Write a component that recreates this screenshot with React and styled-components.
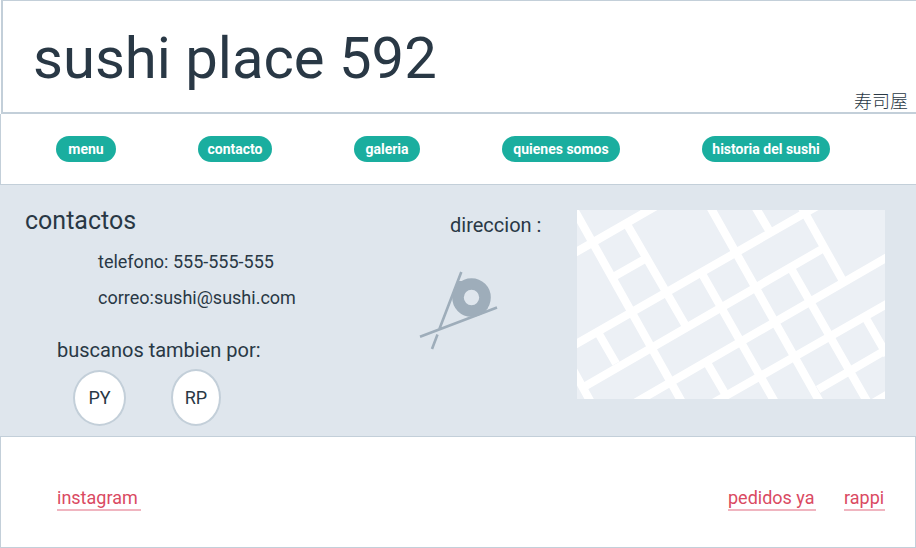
import React from "react";
import styled, { createGlobalStyle } from "styled-components";

const ink = "#293845";
const line = "#c3cfd9";

const GlobalStyle = createGlobalStyle`
  * { box-sizing: border-box; }
  body {
    margin: 0;
    background: #fff;
    color: ${ink};
    font-family: Roboto, "Noto Sans CJK JP", sans-serif;
  }
  h1, h2, h3, p { margin: 0; font-weight: 400; }
`;

const Page = styled.div`
  display: flex;
  flex-direction: column;
  min-height: 100vh;
`;

const Header = styled.header`
  display: flex;
  justify-content: space-between;
  align-items: flex-end;
  margin-left: 1px;
  padding: 17px 8px 0 30px;
  border: solid ${line};
  border-width: 1px 0 2px 2px;
`;

const Title = styled.h1`
  padding-bottom: 14px;
  font-size: 58px;
  line-height: 80px;
`;

const Kanji = styled.p`
  font-family: "Noto Sans CJK JP", sans-serif;
  font-size: 18px;
  font-weight: 300;
  line-height: 24px;
`;

const Nav = styled.nav`
  display: flex;
  gap: 82px;
  padding: 22px 55px;
  border: solid ${line};
  border-width: 0 0 1px 1px;
`;

const Pill = styled.button`
  flex: none;
  width: ${(p) => p.$width}px;
  height: 26px;
  padding: 0;
  border: 0;
  border-radius: 13px;
  background: #1aae9f;
  color: #fff;
  font: 700 14px/26px Roboto, sans-serif;
  text-align: center;
  white-space: nowrap;
  cursor: pointer;
`;

const Contact = styled.main`
  display: flex;
  padding: 20px 31px 10px 25px;
  background: #dfe6ed;
`;

const Details = styled.section`
  flex: 1;
`;

const Heading = styled.h2`
  font-size: 25px;
  line-height: 32px;
`;

const Lines = styled.div`
  display: flex;
  flex-direction: column;
  gap: 12px;
  padding: 13px 0 0 73px;
  font-size: 18px;
  line-height: 24px;
`;

const Social = styled.section`
  padding: 26px 0 0 32px;
`;

const Subheading = styled.h3`
  font-size: 20px;
  line-height: 28px;
`;

const Bubbles = styled.div`
  display: flex;
  align-items: flex-end;
  gap: 45px;
  padding: 5px 0 0 16px;
`;

const Bubble = styled.button`
  width: ${(p) => p.$width}px;
  height: ${(p) => p.$height}px;
  padding: 0;
  border: 2px solid ${line};
  border-radius: 50%;
  background: #fff;
  color: ${ink};
  font: 400 18px/24px Roboto, sans-serif;
  cursor: pointer;
`;

const Address = styled.section`
  display: flex;
  flex-direction: column;
  gap: 31px;
  width: 159px;
  padding-top: 6px;

  ${Subheading} { padding-left: 32px; }
`;

const MapFrame = styled.div`
  width: 308px;
  height: 189px;
  margin-top: 5px;
  background: #ecf0f5;

  svg { display: block; }
`;

const Footer = styled.footer`
  display: flex;
  flex: 1;
  align-items: flex-start;
  gap: 28px;
  padding: 50px 30px 36px 56px;
  border: 1px solid ${line};
`;

const FooterLink = styled.a`
  width: ${(p) => p.$width}px;
  margin-right: ${(p) => (p.$push ? "auto" : "0")};
  border-bottom: 2px solid #f0b5c0;
  color: #da4a62;
  font-size: 18px;
  line-height: 22px;
  text-decoration: none;
  white-space: nowrap;
`;

const navItems = [
  ["menu", 60],
  ["contacto", 74],
  ["galeria", 66],
  ["quienes somos", 118],
  ["historia del sushi", 128],
];

function RollIcon() {
  return (
    <svg width="82" height="82" viewBox="0 0 82 82" aria-hidden="true">
      <g fill="none" stroke="#9eadba">
        <circle cx="53.5" cy="27.5" r="13.5" strokeWidth="11.6" />
        <path
          d="M43.3 2 21.3 59.3M19.5 64.5 14 79M2 66.8 79 37.5"
          strokeWidth="2.6"
        />
      </g>
      <path d="M40.5 11 45 11 37 20ZM66 42 70 38 67 36 56 46Z" fill="#9eadba" />
    </svg>
  );
}

function StreetMap() {
  return (
    <MapFrame role="img" aria-label="mapa">
      <svg width="100%" height="100%" viewBox="0 0 308 189" preserveAspectRatio="xMidYMid slice">
        <g fill="none" stroke="#fff" strokeWidth="8.2">
          <path d="M-6 45 80-4.5M-6 137 242-5M6 177.5 246 38.5M56 194 314 45M131 196 314 91.5M241 179.5 308 140.5M291 196 320 179M38 66 67 49.5" />
          <path d="M-6-6 106 194M49.5 13.5 108.5 115.5M131.5-6 244 194M176.5-6 193 22M224-4 266 71M213.5 57.5 291 193M124 62 199 194M129 151 150 187M20.5 121.5 39 153.5M-5 158 16 196M287 105 310 145" />
        </g>
      </svg>
    </MapFrame>
  );
}

export default function App() {
  return (
    <Page>
      <GlobalStyle />
      <Header>
        <Title>sushi place 592</Title>
        <Kanji lang="ja">寿司屋</Kanji>
      </Header>
      <Nav>
        {navItems.map(([label, width]) => (
          <Pill key={label} type="button" $width={width}>
            {label}
          </Pill>
        ))}
      </Nav>
      <Contact>
        <Details>
          <Heading>contactos</Heading>
          <Lines>
            <p>telefono: 555-555-555</p>
            <p>correo:sushi@sushi.com</p>
          </Lines>
          <Social>
            <Subheading>buscanos tambien por:</Subheading>
            <Bubbles>
              <Bubble type="button" $width={53} $height={56}>PY</Bubble>
              <Bubble type="button" $width={50} $height={57}>RP</Bubble>
            </Bubbles>
          </Social>
        </Details>
        <Address>
          <Subheading>direccion :</Subheading>
          <RollIcon />
        </Address>
        <StreetMap />
      </Contact>
      <Footer>
        <FooterLink href="#instagram" $width={84} $push>instagram</FooterLink>
        <FooterLink href="#pedidos-ya" $width={88}>pedidos ya</FooterLink>
        <FooterLink href="#rappi" $width={41}>rappi</FooterLink>
      </Footer>
    </Page>
  );
}
